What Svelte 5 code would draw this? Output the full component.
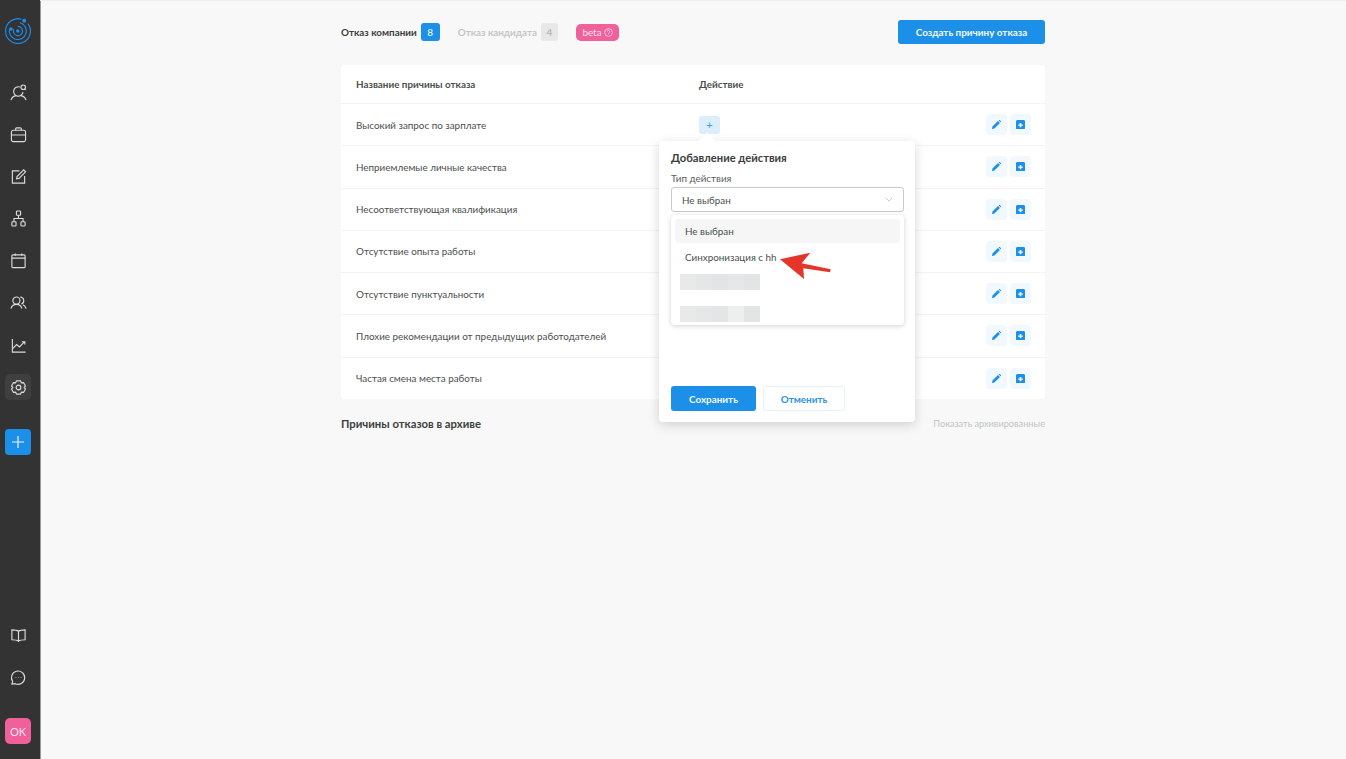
<script>
  const reasons = [
    'Высокий запрос по зарплате',
    'Неприемлемые личные качества',
    'Несоответствующая квалификация',
    'Отсутствие опыта работы',
    'Отсутствие пунктуальности',
    'Плохие рекомендации от предыдущих работодателей',
    'Частая смена места работы'
  ];
</script>

<div class="layout">
  <aside class="sidebar">
    <div class="logo">
      <svg width="26" height="26" viewBox="0 0 26 26" fill="none" stroke="#1d8fe8" stroke-width="1.1">
        <path d="M16.500 1.200A12.400 12.400 0 1 0 22.800 5.500" />
        <path d="M15 4.800A8.500 8.500 0 1 1 4.700 10.500" />
        <path d="M8.800 11A4.600 4.600 0 1 0 12.800 8.400" />
        <circle cx="19.200" cy="2.800" r="2" fill="#1d8fe8" stroke="none" />
        <circle cx="6" cy="11" r="1.800" fill="#1d8fe8" stroke="none" />
        <circle cx="12.800" cy="13" r="1.800" fill="#1d8fe8" stroke="none" />
      </svg>
    </div>

    <nav class="nav">
      <div class="nav-item">
        <svg viewBox="0 0 18 18">
          <path d="M10.500 3.200A5 5 0 1 0 13.800 8.600" />
          <circle cx="14" cy="3.400" r="2.400" />
          <path d="M1 17c.9-2.600 3-4.200 5.600-4.700M17 17c-.9-2.600-3-4.200-5.600-4.700M15.700 5.200l1 1" />
        </svg>
      </div>
      <div class="nav-item">
        <svg viewBox="0 0 18 18">
          <rect x="1.500" y="4.500" width="15" height="12" rx="2" />
          <path d="M6 4.500V3a1 1 0 0 1 1-1h4a1 1 0 0 1 1 1v1.500M1.500 9.500h15" />
        </svg>
      </div>
      <div class="nav-item">
        <svg viewBox="0 0 18 18">
          <path d="M10 3H2.500v13h13V8.500" />
          <path d="M7 11.500l.5-2.500 7-7 2 2-7 7z" />
        </svg>
      </div>
      <div class="nav-item">
        <svg viewBox="0 0 18 18">
          <rect x="6.800" y="1" width="4.400" height="4.500" rx=".8" />
          <rect x="2" y="12.500" width="4.400" height="4.500" rx=".8" />
          <rect x="11.600" y="12.500" width="4.400" height="4.500" rx=".8" />
          <path d="M9 5.500v3.500M4.200 12.500V9h9.600v3.500" />
        </svg>
      </div>
      <div class="nav-item">
        <svg viewBox="0 0 18 18">
          <rect x="2" y="3" width="14" height="13.500" rx="1" />
          <path d="M2 6.500h14M5.500 1.500V4M12.500 1.500V4" />
        </svg>
      </div>
      <div class="nav-item">
        <svg viewBox="0 0 18 18">
          <circle cx="6.800" cy="7" r="3.800" />
          <path d="M10.800 3.200a3.800 3.800 0 0 1 1.200 7.400M1 15.500c.6-2.600 2.800-4.500 5.800-4.500s5.200 1.900 5.800 4.500M13.500 11.300c1.800.6 3 2.200 3.500 4.200" />
        </svg>
      </div>
      <div class="nav-item">
        <svg viewBox="0 0 18 18">
          <path d="M2.500 2v14h14" />
          <path d="M2.500 12.500l4.500-4.500 3 2.500 5.500-5.500M12.500 5h3.200v3" />
        </svg>
      </div>
      <div class="nav-item active">
        <svg viewBox="0 0 18 18">
          <path d="M6.800 2h4.400l.8 2.100 2.300-.3 2.100 3.700-1.400 1.500 1.400 1.500-2.100 3.700-2.300-.3-.8 2.100H6.800L6 13.900l-2.300.3-2.100-3.700L3 9 1.600 7.500l2.100-3.700 2.300.3z" stroke-linejoin="round" />
          <circle cx="9" cy="9" r="2.500" />
        </svg>
      </div>
    </nav>

    <button class="add-btn" aria-label="Добавить">
      <svg viewBox="0 0 14 14" width="14" height="14"><path d="M7 1v12M1 7h12" /></svg>
    </button>

    <div class="sidebar-bottom">
      <div class="nav-item">
        <svg viewBox="0 0 18 18">
          <path d="M9 4.500C7.500 3.300 5 3 2 3v10.500c3 0 5.500.3 7 1.500 1.500-1.200 4-1.500 7-1.500V3c-3 0-5.500.3-7 1.500zM9 4.500V16" />
        </svg>
      </div>
      <div class="nav-item">
        <svg viewBox="0 0 18 18">
          <path d="M2.800 13.200A7 7 0 1 1 5.500 15.500L2 16z" />
          <path d="M6 9h.6M8.700 9h.6M11.400 9h.6" />
        </svg>
      </div>
      <div class="avatar">OK</div>
    </div>
  </aside>

  <main class="main">
    <div class="content">
      <div class="top-bar">
        <div class="tabs">
          <span class="tab current">Отказ компании</span>
          <span class="count blue">8</span>
          <span class="tab muted">Отказ кандидата</span>
          <span class="count grey">4</span>
          <span class="beta">beta
            <svg viewBox="0 0 10 10" width="9" height="9">
              <circle cx="5" cy="5" r="4.300" />
              <path d="M3.600 3.900a1.400 1.400 0 1 1 2.200 1.200c-.5.3-.8.600-.8 1.100M5 7.300v.4" />
            </svg>
          </span>
        </div>
        <button class="primary create">Создать причину отказа</button>
      </div>

      <div class="table">
        <div class="row head">
          <div class="name">Название причины отказа</div>
          <div class="action">Действие</div>
        </div>
        {#each reasons as reason, i}
          <div class="row">
            <div class="name">{reason}</div>
            <div class="action">
              {#if i === 0}
                <span class="plus">+</span>
              {/if}
            </div>
            <div class="row-btns">
              <span class="icon-btn">
                <svg viewBox="0 0 12 12" width="9" height="9">
                  <path class="solid" d="M0 12l.6-3.200L8 1.400 10.600 4 3.200 11.400zM8.900.5l.5-.4a.8.8 0 0 1 1.100 0l1.400 1.400a.8.8 0 0 1 0 1.100l-.4.5z" />
                </svg>
              </span>
              <span class="icon-btn">
                <svg viewBox="0 0 12 12" width="9" height="9">
                  <path class="solid" fill-rule="evenodd" d="M1 0h10l1 1.700v9.700a.6.6 0 0 1-.6.6H.6a.6.6 0 0 1-.6-.6V1.700zM4.900 4v2H2.900v1.800h2v2h2.200v-2h2V6h-2V4z" />
                </svg>
              </span>
            </div>
          </div>
        {/each}
      </div>

      <div class="archive">
        <h3>Причины отказов в архиве</h3>
        <span>Показать архивированные</span>
      </div>

      <div class="popover">
        <span class="caret"></span>
        <h4>Добавление действия</h4>
        <label for="action-type">Тип действия</label>
        <div class="select" id="action-type">
          <span>Не выбран</span>
          <svg viewBox="0 0 10 6" width="8" height="5"><path d="M1 1l4 4 4-4" /></svg>
        </div>
        <div class="dropdown">
          <div class="option selected">Не выбран</div>
          <div class="option">Синхронизация с hh</div>
          <div class="blur"></div>
          <div class="blur second"></div>
        </div>
        <div class="popover-btns">
          <button class="primary save">Сохранить</button>
          <button class="cancel">Отменить</button>
        </div>
      </div>

      <svg class="arrow" viewBox="0 0 60 34" width="60" height="34">
        <path d="M5 12.300L35.300 5.700 26.700 16.300 55.700 22.300 55 25.300 28.300 21.300 29 32z" fill="#e5352b" />
      </svg>
    </div>
  </main>
</div>

<style>
  :global(body) {
    margin: 0;
    font-family: Lato, "Noto Sans", sans-serif;
    color: #3a4040;
    background: #f8f8f8;
  }

  .layout {
    display: flex;
    height: 759px;
    overflow: hidden;
  }

  .sidebar {
    width: 41px;
    flex: none;
    box-sizing: border-box;
    background: #333333;
    border-right: 1px solid #9a9a9a;
    display: flex;
    flex-direction: column;
    align-items: flex-start;
    padding: 18px 0 15px 5px;
    height: 759px;
    margin-right: -1px;
  }

  .logo {
    width: 26px;
    height: 26px;
    margin-bottom: 35px;
  }

  .nav {
    display: flex;
    flex-direction: column;
    gap: 16.200px;
  }

  .nav-item {
    width: 26px;
    height: 26px;
    border-radius: 5px;
    display: flex;
    align-items: center;
    justify-content: center;
  }

  .nav-item.active {
    background: #3f3f3f;
  }

  .nav-item svg {
    width: 17px;
    height: 17px;
    fill: none;
    stroke: #dcdcdc;
    stroke-width: 1.200;
  }

  .add-btn {
    margin-top: 29px;
    width: 26px;
    height: 26px;
    padding: 0;
    border: 0;
    border-radius: 4px;
    background: #1c8fe8;
    display: flex;
    align-items: center;
    justify-content: center;
  }

  .add-btn svg {
    fill: none;
    stroke: #e8f4fd;
    stroke-width: 1.200;
  }

  .sidebar-bottom {
    margin-top: auto;
    display: flex;
    flex-direction: column;
    align-items: center;
    gap: 16px;
  }

  .avatar {
    width: 26px;
    height: 26px;
    margin-top: 12px;
    border-radius: 5px;
    background: #f0609a;
    color: #fbe3ee;
    font-size: 11px;
    display: flex;
    align-items: center;
    justify-content: center;
  }

  .main {
    flex: 1;
    display: flex;
    justify-content: center;
    border-top: 1px solid #eeeeee;
  }

  .content {
    position: relative;
    width: 704px;
    padding-top: 19px;
  }

  .top-bar {
    display: flex;
    justify-content: space-between;
    align-items: center;
    height: 24px;
  }

  .tabs {
    display: flex;
    align-items: center;
    font-size: 9.850px;
  }

  .tab.current {
    font-weight: 700;
    color: #3a4040;
  }

  .tab.muted {
    color: #c4c6c6;
    font-weight: 700;
    margin-left: 18px;
  }

  .count {
    width: 19px;
    height: 18px;
    margin-left: 4px;
    border-radius: 3px;
    display: flex;
    align-items: center;
    justify-content: center;
    font-size: 10px;
  }

  .count.blue {
    background: #1c8fe8;
    color: #fff;
  }

  .count.grey {
    background: #e8e8e8;
    color: #a8a8a8;
    width: 17px;
  }

  .beta {
    margin-left: 18px;
    width: 43px;
    height: 17px;
    border-radius: 5px;
    background: #f0609a;
    color: #fce4ee;
    display: flex;
    align-items: center;
    justify-content: center;
    gap: 2px;
  }

  .beta svg {
    fill: none;
    stroke: #fce4ee;
    stroke-width: .8;
  }

  button {
    font-family: inherit;
    cursor: pointer;
  }

  .primary {
    border: 0;
    border-radius: 3px;
    background: #1c8fe8;
    color: #f4faff;
    font-size: 9.900px;
    font-weight: 700;
  }

  .create {
    width: 147px;
    height: 24px;
  }

  .table {
    margin-top: 21px;
    background: #fff;
    border-radius: 4px;
  }

  .row {
    display: flex;
    align-items: center;
    height: 42.250px;
    padding: 0 14px 0 15px;
    border-top: 1px solid #f3f3f3;
    box-sizing: border-box;
    font-size: 9.850px;
    color: #4a504e;
  }

  .row.head {
    height: 38px;
    border-top: 0;
    font-weight: 700;
  }

  .name {
    width: 343px;
  }

  .action {
    flex: 1;
  }

  .plus {
    display: flex;
    align-items: center;
    justify-content: center;
    width: 21px;
    height: 18px;
    border-radius: 3px;
    background: #dceefc;
    color: #3d9ce8;
    font-size: 11px;
  }

  .row-btns {
    display: flex;
    gap: 3px;
  }

  .icon-btn {
    width: 21px;
    height: 21px;
    border-radius: 4px;
    background: #f1f8fe;
    display: flex;
    align-items: center;
    justify-content: center;
  }

  .solid {
    fill: #1c8fe8;
  }

  .archive {
    display: flex;
    justify-content: space-between;
    align-items: center;
    margin-top: 18px;
    font-size: 9.200px;
    color: #c2c4c4;
  }

  .archive h3 {
    margin: 0;
    font-size: 11.300px;
    font-weight: 700;
    color: #3a4040;
  }

  .popover {
    position: absolute;
    left: 318px;
    top: 140px;
    width: 256px;
    height: 281px;
    box-sizing: border-box;
    padding: 9px 12px;
    background: #fff;
    border-radius: 4px;
    box-shadow: 0 3px 12px rgba(0, 0, 0, 0.16);
  }

  .caret {
    position: absolute;
    left: 42px;
    top: -6px;
    width: 12px;
    height: 12px;
    background: #fff;
    transform: rotate(45deg);
  }

  .popover h4 {
    position: relative;
    margin: 0 0 5px;
    font-size: 11.200px;
    line-height: 16px;
    font-weight: 700;
    color: #3a4040;
  }

  .popover label {
    display: block;
    font-size: 9.850px;
    line-height: 14px;
    color: #5a605e;
    margin-bottom: 2px;
  }

  .select {
    width: 233px;
    height: 25px;
    box-sizing: border-box;
    padding: 0 10px;
    border: 1px solid #c9cccc;
    border-radius: 3px;
    display: flex;
    align-items: center;
    justify-content: space-between;
    font-size: 9.850px;
    color: #4a504e;
  }

  .select svg {
    fill: none;
    stroke: #bbbbbb;
    stroke-width: 1;
  }

  .dropdown {
    position: absolute;
    left: 12px;
    top: 74px;
    width: 233px;
    height: 110px;
    box-sizing: border-box;
    padding: 4px;
    background: #fff;
    border-radius: 4px;
    box-shadow: 0 1px 5px rgba(0, 0, 0, 0.18);
  }

  .option {
    height: 24px;
    padding: 0 10px;
    margin-bottom: 2px;
    display: flex;
    align-items: center;
    border-radius: 4px;
    font-size: 9.850px;
    color: #4a504e;
  }

  .option.selected {
    background: #f6f6f6;
  }

  .blur {
    position: absolute;
    left: 9px;
    top: 59px;
    width: 80px;
    height: 16px;
    background: linear-gradient(90deg, #e9e9e9 0 20%, #e5e6e7 20% 40%, #e3e4e5 40% 60%, #e6e7e8 60% 80%, #e3e4e6 80%);
  }

  .blur.second {
    top: 91px;
    background: linear-gradient(90deg, #e9e9e9 0 20%, #e6e7e8 20% 40%, #e4e5e6 40% 60%, #ecefee 60% 80%, #e3e4e6 80%);
  }

  .popover-btns {
    position: absolute;
    left: 12px;
    bottom: 11px;
    display: flex;
    gap: 7px;
  }

  .save {
    width: 85px;
    height: 25px;
  }

  .cancel {
    width: 82px;
    height: 25px;
    border: 1px solid #e3f1fc;
    border-radius: 3px;
    background: #fff;
    color: #2c93e8;
    font-size: 9.900px;
    font-weight: 700;
  }

  .arrow {
    position: absolute;
    left: 434px;
    top: 246px;
  }
</style>
